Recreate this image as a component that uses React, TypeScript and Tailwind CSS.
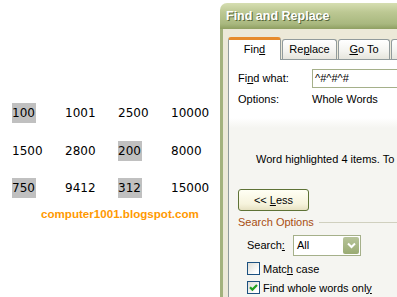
const rows = [
  [
    { v: "100", hl: true },
    { v: "1001" },
    { v: "2500" },
    { v: "10000" },
  ],
  [{ v: "1500" }, { v: "2800" }, { v: "200", hl: true }, { v: "8000" }],
  [
    { v: "750", hl: true },
    { v: "9412" },
    { v: "312", hl: true },
    { v: "15000" },
  ],
];

function NumbersSheet() {
  return (
    <div className="flex w-[220px] shrink-0 flex-col pl-[12px] pt-[103px] font-['DejaVu_Sans',sans-serif] text-[12px] text-black">
      <div className="flex flex-col gap-[17.5px]">
        {rows.map((row, r) => (
          <div key={r} className="grid h-[20px] grid-cols-[53px_53px_53px_53px]">
            {row.map((cell, c) => (
              <div key={c} className="flex items-center">
                <span
                  className={
                    cell.hl
                      ? "h-[20px] bg-[#c0c0c0] pr-[1px] leading-[20px]"
                      : "h-[20px] leading-[20px]"
                  }
                >
                  {cell.v}
                </span>
              </div>
            ))}
          </div>
        ))}
      </div>
      <div className="ml-[29px] mt-[9px] font-['Liberation_Sans',sans-serif] text-[11.6px] font-bold leading-[14px] text-[#ff9900]">
        computer1001.blogspot.com
      </div>
    </div>
  );
}

function Tab({ label, width }: { label: React.ReactNode; width: string }) {
  return (
    <div
      className={`ml-[1px] flex h-[20px] shrink-0 items-center justify-center rounded-t-[3px] border-x border-t border-[#919b9c] bg-[linear-gradient(to_bottom,#ffffff,#f3f3ef_60%,#e6e5dd)] ${width}`}
    >
      {label}
    </div>
  );
}

function Checkbox({ checked, label }: { checked?: boolean; label: React.ReactNode }) {
  return (
    <div className="mt-[6px] flex h-[13px] shrink-0 items-center pl-[9px]">
      <div className="flex h-[13px] w-[13px] items-center justify-center border border-[#1c5180] bg-[linear-gradient(135deg,#dcdcd5,#ffffff_80%)]">
        {checked && (
          <svg width="9" height="9" viewBox="0 0 9 9">
            <path d="M1 4.2 L3.4 6.6 L8 2" fill="none" stroke="#21a121" strokeWidth="2.2" />
          </svg>
        )}
      </div>
      <span className="ml-[3px] leading-[14px]">{label}</span>
    </div>
  );
}

function FindReplaceDialog() {
  return (
    <div className="mt-[3px] flex w-[440px] shrink-0 flex-col self-start font-['Liberation_Sans',sans-serif] text-[11px] text-black">
      {/* title bar */}
      <div className="flex h-[26px] shrink-0 items-center rounded-tl-[7px] bg-[linear-gradient(to_bottom,#d6deb2,#bcc893_35%,#a9b87f_80%,#8f9f62)] pl-[6px]">
        <span className="text-[12.5px] font-bold text-white [text-shadow:1px_1px_0_#56663a]">
          Find and Replace
        </span>
      </div>

      {/* window body */}
      <div className="flex shrink-0 flex-col border-l-[3px] border-l-[#a3b27d] bg-[#ece9d8] pl-[5px] pt-[8px]">
        {/* tabs */}
        <div className="relative z-10 flex h-[22px] shrink-0 items-end">
          <div className="-mb-px flex h-[23px] w-[53px] shrink-0 items-center justify-center rounded-t-[3px] border-x border-t-[3px] border-x-[#919b9c] border-t-[#e68b2c] bg-white pb-[2px]">
            Fin<span className="underline">d</span>
          </div>
          <Tab
            width="w-[55px]"
            label={
              <>
                Re<span className="underline">p</span>lace
              </>
            }
          />
          <Tab
            width="w-[52px]"
            label={
              <>
                <span className="underline">G</span>o To
              </>
            }
          />
          <Tab width="w-[60px]" label="" />
        </div>

        {/* tab panel */}
        <div className="flex h-[250px] shrink-0 flex-col border border-[#919b9c] bg-[linear-gradient(to_bottom,#ffffff_0px,#ffffff_58px,#f5f5f1_68px)] pl-[9px]">
          <div className="mt-[9px] flex h-[19px] shrink-0 items-center">
            <span className="w-[74px]">
              Fi<span className="underline">n</span>d what:
            </span>
            <div className="flex h-[19px] flex-1 items-center border border-[#a5b08a] bg-white pl-[2px]">
              ^#^#^#
            </div>
          </div>
          <div className="mt-[4px] flex h-[14px] shrink-0 items-center">
            <span className="w-[74px]">Options:</span>
            <span>Whole Words</span>
          </div>

          <div className="mt-[46px] h-[14px] shrink-0 whitespace-nowrap pl-[18px] leading-[14px]">
            Word highlighted 4 items. To close this dialog box, click Close.
          </div>

          <div className="mt-[23px] flex h-[22px] w-[71px] shrink-0 items-center justify-center rounded-[3px] border border-[#5e7236] bg-[linear-gradient(to_bottom,#fffff4,#f6f3dc_70%,#e6e1c2)]">
            &lt;&lt; <span className="ml-[3px] underline">L</span>ess
          </div>

          <div className="mt-[4px] flex h-[14px] shrink-0 items-center">
            <span className="text-[#a84f12]">Search Options</span>
            <div className="ml-[5px] h-px flex-1 bg-[#d0d0bf]" />
          </div>

          <div className="mt-[6px] flex h-[21px] shrink-0 items-center pl-[9px]">
            <span className="w-[46px]">
              Search<span className="underline">:</span>
            </span>
            <div className="flex h-[21px] w-[68px] items-center justify-between border border-[#a5b08a] bg-white pl-[3px] pr-[1px]">
              <span>All</span>
              <div className="flex h-[17px] w-[16px] items-center justify-center rounded-[2px] bg-[linear-gradient(to_bottom,#b7c49a,#9aab73)]">
                <svg width="9" height="7" viewBox="0 0 9 7">
                  <path d="M1 1.5 L4.5 5 L8 1.5" fill="none" stroke="#ffffff" strokeWidth="2" />
                </svg>
              </div>
            </div>
          </div>

          <Checkbox
            label={
              <>
                Matc<span className="underline">h</span> case
              </>
            }
          />
          <Checkbox
            checked
            label={
              <>
                Find whole words onl<span className="underline">y</span>
              </>
            }
          />
        </div>
      </div>
    </div>
  );
}

export default function App() {
  return (
    <div className="flex h-[297px] w-[397px] overflow-hidden bg-white">
      <NumbersSheet />
      <FindReplaceDialog />
    </div>
  );
}
